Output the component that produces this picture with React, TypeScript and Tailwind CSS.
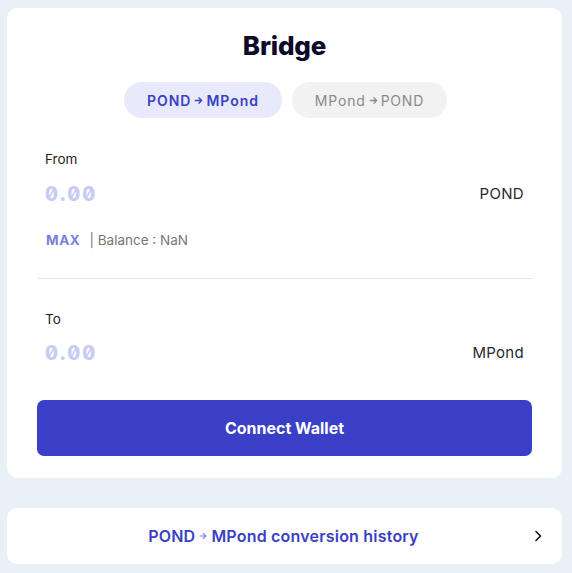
import React from "react";

const font = { fontFamily: "Inter, 'Noto Sans', sans-serif" };

function Arrow({ className }: { className?: string }) {
  return (
    <svg viewBox="0 0 10 10" className={className} fill="none" stroke="currentColor" strokeWidth="1.4" strokeLinecap="round" strokeLinejoin="round">
      <path d="M1.5 5h7M5.5 2l3 3-3 3" />
    </svg>
  );
}

function AmountRow({ unit }: { unit: string }) {
  return (
    <div className="flex items-center justify-between h-[28px]">
      <input
        placeholder="0.00"
        className="w-[200px] bg-transparent outline-none text-[20px] font-extrabold placeholder:text-[#c9cbf3] tracking-[2px] [font-feature-settings:'zero','tnum']"
        style={{ fontFamily: "Inter, sans-serif" }}
      />
      <span className="text-[15px] text-[#2a2a2a] font-normal tracking-[0.3px]">{unit}</span>
    </div>
  );
}

export default function App() {
  return (
    <div className="min-h-[573px] w-[572px] bg-[#e8f1f5] pt-[8px] pl-[7px] pr-[10px]" style={font}>
      <div className="bg-white rounded-[10px] w-[555px] h-[470px] px-[30px] pt-[22px]">
        <h1 className="text-center text-[26px] font-extrabold text-[#0c0b2c] leading-[32px] tracking-[-0.2px]">Bridge</h1>
        <div className="flex justify-center gap-[10px] mt-[20px] pl-[2px]">
          <button className="w-[158px] h-[36px] rounded-full bg-[#e8eafb] text-[#3a40c4] text-[14px] font-semibold tracking-[1px] flex items-center justify-center gap-[3px]">
            POND <Arrow className="w-[9px] h-[9px]" /> MPond
          </button>
          <button className="w-[155px] h-[36px] rounded-full bg-[#f2f2f2] text-[#8a8a8a] text-[14px] font-normal tracking-[0.8px] flex items-center justify-center gap-[3px]">
            MPond <Arrow className="w-[9px] h-[9px]" /> POND
          </button>
        </div>

        <div className="px-[8px] mt-[32px]">
          <div className="text-[13.5px] text-[#2a1a1a] leading-[18px]">From</div>
          <div className="mt-[12px]">
            <AmountRow unit="POND" />
          </div>
          <div className="mt-[23px] flex items-center text-[13.5px] leading-[18px]">
            <span className="font-bold text-[#7a80dc] tracking-[0.6px] ml-[1px]">MAX</span>
            <span className="ml-[9px] text-[#777]">| Balance : NaN</span>
          </div>
        </div>

        <div className="h-px bg-[#e5e5e5] mt-[29px]" />

        <div className="px-[8px] mt-[31px]">
          <div className="text-[13.5px] text-[#2a1a1a] leading-[18px]">To</div>
          <div className="mt-[11px]">
            <AmountRow unit="MPond" />
          </div>
        </div>

        <button className="mt-[33px] w-full h-[56px] rounded-[7px] bg-[#3940c7] text-white text-[16px] font-bold">
          Connect Wallet
        </button>
      </div>

      <div className="mt-[30px] bg-white rounded-[10px] w-[555px] h-[56px] flex items-center relative">
        <div className="flex-1 flex items-center justify-center gap-[4px] text-[16px] font-semibold text-[#3a40c4] tracking-[0.2px] pr-[2px]">
          POND <Arrow className="w-[8px] h-[8px] text-[#7a80dc]" /> MPond conversion history
        </div>
        <svg viewBox="0 0 10 12" className="absolute right-[19px] w-[10px] h-[12px] text-[#111]" fill="none" stroke="currentColor" strokeWidth="1.6" strokeLinecap="round" strokeLinejoin="round">
          <path d="M3 1.5 7.5 6 3 10.5" />
        </svg>
      </div>
    </div>
  );
}
